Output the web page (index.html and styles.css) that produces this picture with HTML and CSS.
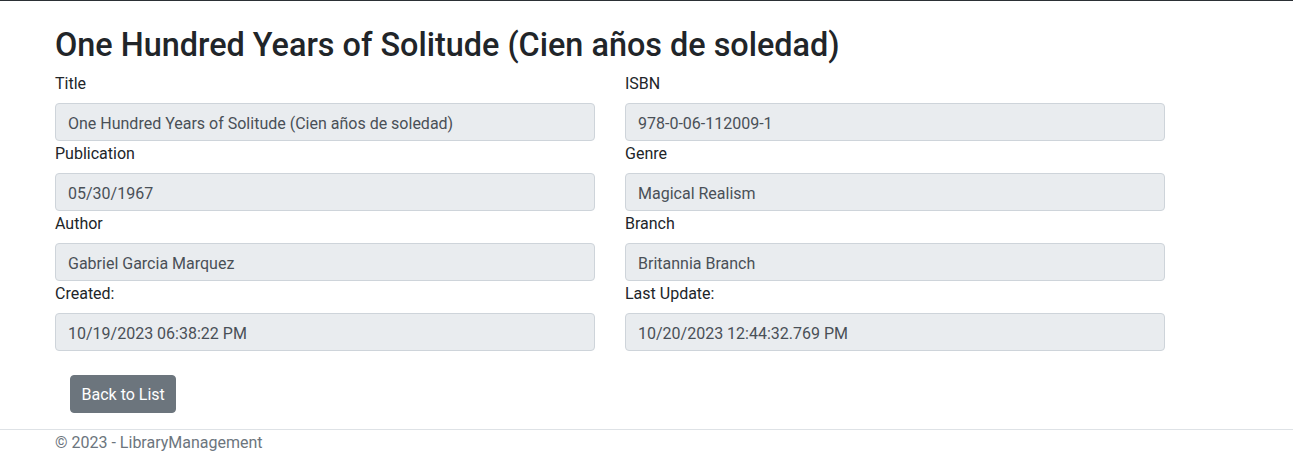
FILE: index.html
```html
<!DOCTYPE html>
<html lang="en">
<head>
<meta charset="utf-8">
<title>Details - LibraryManagement</title>
<link rel="stylesheet" href="styles.css">
</head>
<body>
<div class="topbar"></div>
<main class="container">
  <h2 class="page-title">One Hundred Years of Solitude (Cien años de soledad)</h2>
  <div class="row">
    <div class="col">
      <div class="field">
        <label class="field-label">Title</label>
        <input class="form-control" type="text" value="One Hundred Years of Solitude (Cien años de soledad)" readonly>
      </div>
      <div class="field">
        <label class="field-label">Publication</label>
        <input class="form-control" type="text" value="05/30/1967" readonly>
      </div>
      <div class="field">
        <label class="field-label">Author</label>
        <input class="form-control" type="text" value="Gabriel Garcia Marquez" readonly>
      </div>
      <div class="field">
        <label class="field-label">Created:</label>
        <input class="form-control" type="text" value="10/19/2023 06:38:22 PM" readonly>
      </div>
    </div>
    <div class="col">
      <div class="field">
        <label class="field-label">ISBN</label>
        <input class="form-control" type="text" value="978-0-06-112009-1" readonly>
      </div>
      <div class="field">
        <label class="field-label">Genre</label>
        <input class="form-control" type="text" value="Magical Realism" readonly>
      </div>
      <div class="field">
        <label class="field-label">Branch</label>
        <input class="form-control" type="text" value="Britannia Branch" readonly>
      </div>
      <div class="field">
        <label class="field-label">Last Update:</label>
        <input class="form-control" type="text" value="10/20/2023 12:44:32.769 PM" readonly>
      </div>
    </div>
  </div>
  <div class="actions">
    <a class="btn btn-secondary" href="#">Back to List</a>
  </div>
</main>
<footer class="footer">
  <div class="container footer-text">© 2023 - LibraryManagement</div>
</footer>
</body>
</html>
```
FILE: styles.css
```css
* { box-sizing: border-box; }
html, body { margin: 0; padding: 0; }
body {
  font-family: Roboto, "Liberation Sans", sans-serif;
  font-size: 16px;
  line-height: 24px;
  color: #212529;
  background: #fff;
}
.topbar {
  height: 1px;
  background: #2b3035;
}
.container {
  padding-left: 55px;
  width: 1165px;
}
.page-title {
  margin: 25px 0 8px 0;
  padding-top: 2px;
  font-size: 32.4px;
  line-height: 35px;
  font-weight: 500;
  color: #212529;
  white-space: nowrap;
}
.row {
  display: flex;
  gap: 30px;
}
.col {
  width: 540px;
  display: flex;
  flex-direction: column;
}
.field {
  display: flex;
  flex-direction: column;
}
.field-label {
  display: block;
  margin-bottom: 8px;
  padding-top: 1px;
  height: 24px;
}
.form-control {
  display: block;
  width: 100%;
  height: 38px;
  margin: 0;
  padding: 7px 12px 5px 12px;
  font-family: inherit;
  font-size: 16px;
  line-height: 24px;
  color: #495057;
  background: #e9ecef;
  border: 1px solid #ced4da;
  border-radius: 4px;
  outline: none;
}
.actions {
  padding: 24px 0 16px 15px;
}
.btn {
  display: inline-block;
  padding: 7px 10.5px 5px 10.5px;
  height: 38px;
  font-size: 16px;
  line-height: 24px;
  color: #fff;
  text-decoration: none;
  border: 1px solid #6c757d;
  border-radius: 4px;
}
.btn-secondary {
  background: #6c757d;
}
.footer {
  border-top: 1px solid #dee2e6;
}
.footer-text {
  padding-top: 1px;
  color: #6c757d;
  line-height: 24px;
}
```
